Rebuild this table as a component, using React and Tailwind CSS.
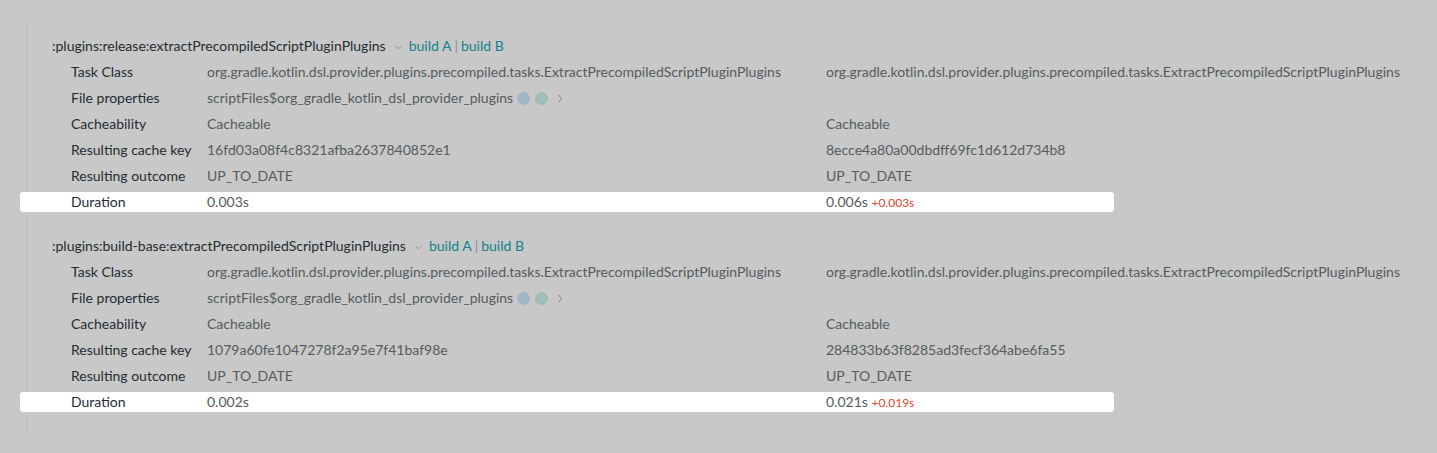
const tasks = [
  {
    path: ':plugins:release:extractPrecompiledScriptPluginPlugins',
    keyA: '16fd03a08f4c8321afba2637840852e1',
    keyB: '8ecce4a80a00dbdff69fc1d612d734b8',
    durA: '0.003s',
    durB: '0.006s',
    diff: '+0.003s',
  },
  {
    path: ':plugins:build-base:extractPrecompiledScriptPluginPlugins',
    keyA: '1079a60fe1047278f2a95e7f41baf98e',
    keyB: '284833b63f8285ad3fecf364abe6fa55',
    durA: '0.002s',
    durB: '0.021s',
    diff: '+0.019s',
  },
];

const taskClass = 'org.gradle.kotlin.dsl.provider.plugins.precompiled.tasks.ExtractPrecompiledScriptPluginPlugins';

const Row = ({ label, a, b, highlight }) => (
  <div
    className={`flex items-center h-5 ${highlight ? 'bg-white rounded-[3px] -ml-[7px] pl-[51px] w-[1094px]' : 'pl-[44px]'}`}
  >
    <div className="w-[136px] shrink-0 text-[#1f2c33]">{label}</div>
    <div className="w-[619px] shrink-0 text-[#555b5e] flex items-center">{a}</div>
    <div className="text-[#555b5e] whitespace-nowrap">{b}</div>
  </div>
);

const FileProps = () => (
  <span className="flex items-center">
    scriptFiles$org_gradle_kotlin_dsl_provider_plugins
    <span className="ml-[4px] w-[13px] h-[13px] rounded-full bg-[#a1b5c8]" />
    <span className="ml-[5px] w-[13px] h-[13px] rounded-full bg-[#9ebfb5]" />
    <svg className="ml-[9px]" width="6" height="9" viewBox="0 0 6 9" fill="none">
      <path d="M1.5 1 L4.5 4.5 L1.5 8" stroke="#7a8085" strokeWidth="1" />
    </svg>
  </span>
);

const TaskBlock = ({ t }) => (
  <div className="flex flex-col gap-[6px]">
    <div className="flex items-center h-5 pl-[25px] text-[#1f2c33] whitespace-nowrap">
      <span>{t.path}</span>
      <svg className="ml-[9px] mr-[7px] mt-[2px]" width="7" height="5" viewBox="0 0 7 5" fill="none">
        <path d="M0.5 0.8 L3.5 3.8 L6.5 0.8" stroke="#8a9095" strokeWidth="1" />
      </svg>
      <span className="text-[#12808e]">build A</span>
      <span className="text-[#8a9095] mx-[3px]">|</span>
      <span className="text-[#12808e]">build B</span>
    </div>
    <Row label="Task Class" a={taskClass} b={taskClass} />
    <Row label="File properties" a={<FileProps />} b="" />
    <Row label="Cacheability" a="Cacheable" b="Cacheable" />
    <Row label="Resulting cache key" a={t.keyA} b={t.keyB} />
    <Row label="Resulting outcome" a="UP_TO_DATE" b="UP_TO_DATE" />
    <Row
      label="Duration"
      a={t.durA}
      b={
        <span>
          {t.durB} <span className="text-[12px] text-[#e0462c]">{t.diff}</span>
        </span>
      }
      highlight
    />
  </div>
);

export default function App() {
  return (
    <div
      className="w-[1437px] h-[453px] bg-[#c8c8c8] pt-5 pl-[26px] text-[14px] leading-5"
      style={{ fontFamily: 'Lato, "Noto Sans", sans-serif' }}
    >
      <div className="border-l border-[#bdbdbd] pt-4 pb-[21px] flex flex-col gap-6">
        {tasks.map((t) => (
          <TaskBlock key={t.path} t={t} />
        ))}
      </div>
    </div>
  );
}
